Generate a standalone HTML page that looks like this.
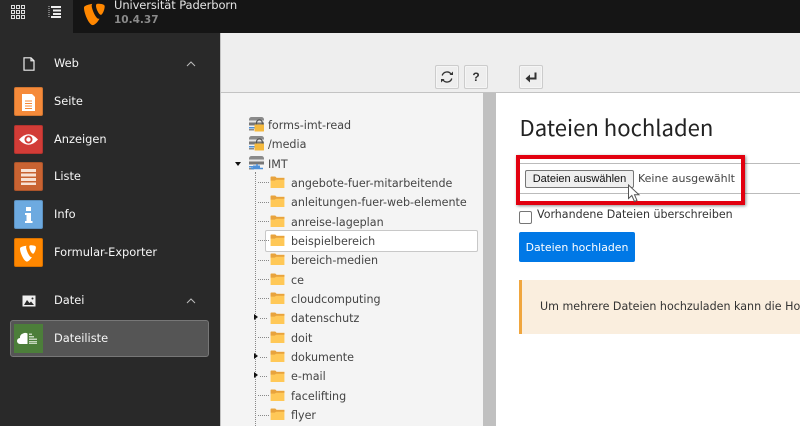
<!DOCTYPE html>
<html><head><meta charset="utf-8"><style>
html,body{margin:0;padding:0;width:800px;height:426px;overflow:hidden;background:#fff}
body{position:relative;font-family:"DejaVu Sans","Liberation Sans",sans-serif;color:#333}
.a{position:absolute;white-space:nowrap}
.m{position:absolute;left:54px;font-size:11.4px;color:#f6f6f6;line-height:14px;white-space:nowrap;font-weight:400}
.ic{position:absolute;left:14px;width:29px;height:29px;border-radius:2px;box-shadow:inset 0 0 0 1px rgba(0,0,0,.15)}
.ic svg{position:absolute;left:0;top:0}
.t{position:absolute;left:291px;font-size:11.13px;color:#444;line-height:14px;white-space:nowrap}
.f{position:absolute;left:270px;width:15px;height:12px}
.h{position:absolute;left:258px;width:11px;border-top:1px dotted #888;height:0}
.ar{position:absolute;left:254px;width:0;height:0;border-left:4px solid #111;border-top:3.5px solid transparent;border-bottom:3.5px solid transparent}
.btn{position:absolute;top:65px;width:22px;height:22px;border:1px solid #ccc;border-radius:2px;background:#eee;box-shadow:inset 0 0 0 1px #f5f5f5}
</style></head><body>
<svg width="0" height="0" style="position:absolute"><defs>
<g id="fo"><path d="M0 1.5Q0 .5 1 .5H5L6.5 2H15V13H0Z" fill="#ffc857"/><path d="M0 1.5Q0 .5 1 .5H5L6.5 2H15V4H6L4.5 5H0Z" fill="#e8a33d"/></g>
<g id="dr"><rect x="1" y="1" width="15" height="8" rx="2.5" fill="#8a8a8a"/><rect x="1" y="4.500" width="15" height="2" fill="#e8e8e8"/><rect x="1" y="6.500" width="15" height="3" fill="#777"/><rect x="1" y="11" width="6" height="1.500" fill="#4d90d8"/><rect x="1" y="13" width="5" height="1.500" fill="#888"/></g>
<g id="lk"><path d="M8.500 9V6.800a2.900 2.900 0 0 1 5.800 0V9" fill="none" stroke="#555" stroke-width="1.200"/><rect x="6.500" y="8.500" width="9.500" height="7" rx=".5" fill="#f4b93e"/></g>
</defs></svg>

<div class="a" style="left:0;top:0;width:220px;height:426px;background:#292929"></div>
<div class="a" style="left:73px;top:0;width:727px;height:33px;background:#151515"></div>

<svg class="a" style="left:11px;top:5px" width="14" height="14" viewBox="0 0 14 14" fill="none" stroke="#ddd" stroke-width="1"><rect x=".5" y=".5" width="3" height="3"/><rect x="5.500" y=".5" width="3" height="3"/><rect x="10.500" y=".5" width="3" height="3"/><rect x=".5" y="5.500" width="3" height="3"/><rect x="5.500" y="5.500" width="3" height="3"/><rect x="10.500" y="5.500" width="3" height="3"/><rect x=".5" y="10.500" width="3" height="3"/><rect x="5.500" y="10.500" width="3" height="3"/><rect x="10.500" y="10.500" width="3" height="3"/></svg>
<svg class="a" style="left:48px;top:5px" width="13" height="14" viewBox="0 0 13 14"><path d="M1 1V13" stroke="#ccc" stroke-dasharray="1 1"/><path d="M3 1H13V3H3ZM5 4.500H13V6.500H5ZM5 8H13V10H5ZM3 11H13V13H3Z" fill="#eee"/></svg>
<svg class="a" style="left:84px;top:3px" width="21" height="23" viewBox="0 0 21 23"><path d="M15.500 15.700c-.3.100-.6.100-.9.100-2.800 0-6.900-9.800-6.900-13 0-1.200.3-1.600.7-1.900C5 1.300 1 2.500 .3 3.800 0 4.100 0 4.500 0 5.100c0 5 5 17 8.800 17 1.800 0 4.800-2.900 6.700-6.400Z" fill="#ff8700"/><path d="M13.700.8c3.500 0 7 .6 7 2.500 0 3.900-2.500 8.600-3.700 8.600C14.800 11.900 12 5.800 12 2.800 12 1.400 12.500.8 13.700.8Z" fill="#ff8700"/></svg>
<div class="a" style="left:114px;top:-2px;font-size:11.5px;line-height:14px;color:#e4e4e4;letter-spacing:-.1px">Universität Paderborn</div>
<div class="a" style="left:114px;top:13px;font-size:10.5px;font-weight:700;line-height:14px;color:#8a8a8a">10.4.37</div>

<svg class="a" style="left:23px;top:57px" width="12" height="14" viewBox="0 0 12 14"><path d="M1 .8H8L11 3.800V13.200H1ZM8 .8V3.800H11" fill="none" stroke="#eee" stroke-width="1.200"/></svg>
<div class="m" style="top:56px">Web</div>
<svg class="a" style="left:186px;top:61px" width="10" height="6" viewBox="0 0 10 6"><path d="M1 5L5 1L9 5" fill="none" stroke="#bbb" stroke-width="1"/></svg>

<div class="ic" style="top:87px;background:#f58a3a"><svg width="29" height="29"><path d="M8 7H18L21 10V24H8Z" fill="#fff"/><path d="M11 14H18M11 16.500H18M11 19H18M11 21.500H18" stroke="#f58a3a"/></svg></div>
<div class="m" style="top:94px">Seite</div>
<div class="ic" style="top:125px;background:#d23c37"><svg width="29" height="29"><path d="M5 14.500Q14.500 4 24 14.500Q14.500 25 5 14.500Z" fill="#fff"/><circle cx="14.500" cy="14.500" r="4" fill="#d23c37"/><circle cx="14.500" cy="14.500" r="2.200" fill="#fff"/></svg></div>
<div class="m" style="top:132px">Anzeigen</div>
<div class="ic" style="top:162px;background:#c96332"><svg width="29" height="29"><path d="M7 7H22V10H7ZM7 11.500H22V14.500H7ZM7 16H22V19H7ZM7 20.500H22V23H7Z" fill="#f8e2d5"/></svg></div>
<div class="m" style="top:169px">Liste</div>
<div class="ic" style="top:200px;background:#6daae0"><svg width="29" height="29"><rect x="12" y="7" width="5" height="4" fill="#fff"/><path d="M11 13H17V21H18.500V23H11V21H12.500V15H11Z" fill="#fff"/></svg></div>
<div class="m" style="top:207px">Info</div>
<div class="ic" style="top:238px;background:#ff8700"><svg width="29" height="29"><path d="M18 19c-.3.100-.5.100-.7.100-2.100 0-5.200-7.400-5.200-9.800 0-.9.200-1.200.5-1.500C10 8 7 8.900 6.300 9.800c-.2.300-.3.600-.3 1 0 3.800 4 12.800 6.900 12.800 1.400 0 3.600-2.200 5.100-4.600Z" fill="#fff"/><path d="M16.600 7.300c2.600 0 5.300.5 5.300 1.900 0 2.900-1.900 6.500-2.800 6.500-1.700 0-3.800-4.600-3.800-6.900 0-1 .4-1.500 1.300-1.500Z" fill="#fff"/></svg></div>
<div class="m" style="top:245px">Formular-Exporter</div>

<svg class="a" style="left:22px;top:295px" width="14" height="12" viewBox="0 0 14 12"><rect x=".5" y=".5" width="13" height="11" fill="#eee"/><path d="M2 10L5 5L7.500 8L9 6.500L12 10Z" fill="#292929"/><circle cx="10.500" cy="3.500" r="1" fill="#292929"/></svg>
<div class="m" style="top:293px">Datei</div>
<svg class="a" style="left:186px;top:298px" width="10" height="6" viewBox="0 0 10 6"><path d="M1 5L5 1L9 5" fill="none" stroke="#bbb" stroke-width="1"/></svg>

<div class="a" style="left:10px;top:320px;width:197px;height:35px;background:#555;border:1px solid #777;border-radius:3px"></div>
<div class="ic" style="top:324px;background:#4c7e3a;box-shadow:none;border-radius:0"><svg width="29" height="29"><path d="M6 19.500a3 3 0 0 1 0-6a4 4 0 0 1 3-4.500a4.500 4.500 0 0 1 4.500 0V19.500Z" fill="#fff" transform="translate(0,.5)"/><path d="M15 9.500H18V11H15ZM15 12H20V13.500H15ZM15 14.500H23V16H15ZM15 17H23V18.500H15ZM15 19H23V20H15Z" fill="#c5d6bd"/></svg></div>
<div class="m" style="top:331px">Dateiliste</div>

<div class="a" style="left:220px;top:33px;width:580px;height:59px;background:#eee;border-bottom:1px solid #c3c3c3"></div>
<div class="a" style="left:220px;top:93px;width:263px;height:333px;background:#f4f4f4"></div>
<div class="a" style="left:220px;top:33px;width:1px;height:393px;background:#c3c3c3"></div>
<div class="a" style="left:483px;top:93px;width:13px;height:333px;background:#c0c0c0"></div>

<div class="btn" style="left:435px"><svg width="22" height="22" viewBox="0 0 22 22"><path d="M6.200 9.500A5 5 0 0 1 15.200 8.300M15.800 12.500A5 5 0 0 1 6.800 13.700" fill="none" stroke="#333" stroke-width="1.300"/><path d="M13.500 9H17V5.500ZM8.500 13H5V16.500Z" fill="#333"/></svg></div>
<div class="btn" style="left:464px"><div class="a" style="left:0;top:4px;width:22px;text-align:center;font-size:12px;font-weight:700;line-height:14px;font-family:'Liberation Sans',sans-serif">?</div></div>
<div class="btn" style="left:519px"><svg width="22" height="22" viewBox="0 0 22 22"><path d="M15.500 6.500V12.500H8" fill="none" stroke="#333" stroke-width="2"/><path d="M5.500 12.500L10 8.500V16.500Z" fill="#333"/></svg></div>

<svg class="a" style="left:248px;top:116px" width="18" height="16"><use href="#dr"/><use href="#lk"/></svg>
<div class="t" style="left:268px;top:119px">forms-imt-read</div>
<svg class="a" style="left:248px;top:135px" width="18" height="16"><use href="#dr"/><use href="#lk"/></svg>
<div class="t" style="left:268px;top:138px">/media</div>
<div class="a" style="left:235px;top:162px;width:0;height:0;border-top:4px solid #111;border-left:3.500px solid transparent;border-right:3.500px solid transparent"></div>
<svg class="a" style="left:248px;top:155px" width="18" height="16"><use href="#dr"/><path d="M3 13.500H15M9 9V12" stroke="#4d90d8" stroke-width="1.500"/><rect x="5" y="10.500" width="7" height="3.500" fill="#4d90d8"/></svg>
<div class="t" style="left:268px;top:158px">IMT</div>

<div class="a" style="left:255px;top:172px;height:254px;border-left:1px dotted #888"></div>
<div class="a" style="left:265px;top:230px;width:211px;height:20px;background:#fff;border:1px solid #c8c8c8;border-radius:2px"></div>

<div class="h" style="top:182px"></div><svg class="f" style="top:176px" viewBox="0 0 15 13"><use href="#fo"/></svg><div class="t" style="top:177px">angebote-fuer-mitarbeitende</div>
<div class="h" style="top:202px"></div><svg class="f" style="top:195px" viewBox="0 0 15 13"><use href="#fo"/></svg><div class="t" style="top:196px">anleitungen-fuer-web-elemente</div>
<div class="h" style="top:221px"></div><svg class="f" style="top:215px" viewBox="0 0 15 13"><use href="#fo"/></svg><div class="t" style="top:216px">anreise-lageplan</div>
<div class="h" style="top:240px"></div><svg class="f" style="top:234px" viewBox="0 0 15 13"><use href="#fo"/></svg><div class="t" style="top:235px">beispielbereich</div>
<div class="h" style="top:260px"></div><svg class="f" style="top:253px" viewBox="0 0 15 13"><use href="#fo"/></svg><div class="t" style="top:254px">bereich-medien</div>
<div class="h" style="top:279px"></div><svg class="f" style="top:273px" viewBox="0 0 15 13"><use href="#fo"/></svg><div class="t" style="top:274px">ce</div>
<div class="h" style="top:298px"></div><svg class="f" style="top:292px" viewBox="0 0 15 13"><use href="#fo"/></svg><div class="t" style="top:293px">cloudcomputing</div>
<div class="ar" style="top:314px"></div><div class="h" style="top:318px;left:260px;width:7px"></div><svg class="f" style="top:312px" viewBox="0 0 15 13"><use href="#fo"/></svg><div class="t" style="top:312px">datenschutz</div>
<div class="h" style="top:337px"></div><svg class="f" style="top:331px" viewBox="0 0 15 13"><use href="#fo"/></svg><div class="t" style="top:332px">doit</div>
<div class="ar" style="top:353px"></div><div class="h" style="top:357px;left:260px;width:7px"></div><svg class="f" style="top:350px" viewBox="0 0 15 13"><use href="#fo"/></svg><div class="t" style="top:351px">dokumente</div>
<div class="ar" style="top:372px"></div><div class="h" style="top:376px;left:260px;width:7px"></div><svg class="f" style="top:370px" viewBox="0 0 15 13"><use href="#fo"/></svg><div class="t" style="top:370px">e-mail</div>
<div class="h" style="top:395px"></div><svg class="f" style="top:389px" viewBox="0 0 15 13"><use href="#fo"/></svg><div class="t" style="top:390px">facelifting</div>
<div class="h" style="top:415px"></div><svg class="f" style="top:408px" viewBox="0 0 15 13"><use href="#fo"/></svg><div class="t" style="top:409px">flyer</div>

<div class="a" style="left:519.500px;top:112px;font-size:22.100px;line-height:30px;color:#222;font-family:'Noto Sans CJK JP','DejaVu Sans',sans-serif">Dateien hochladen</div>

<div class="a" style="left:519px;top:163px;width:281px;height:29px;border-top:1px solid #bbb;border-bottom:1px solid #bbb"></div>
<div class="a" style="left:516px;top:155px;width:221px;height:42px;border:4px solid #e2000f;box-shadow:1px 1px 3px rgba(0,0,0,.45)"></div>
<div class="a" style="left:525px;top:170px;width:107px;height:16px;background:#efefef;border:1px solid #767676;border-radius:2px;text-align:center;font:11px/16px 'Liberation Sans',sans-serif;color:#111">Dateien auswählen</div>
<div class="a" style="left:638px;top:171px;font-size:11px;line-height:15px;color:#444">Keine ausgewählt</div>
<svg class="a" style="left:627px;top:184px" width="14" height="19" viewBox="0 0 14 19"><path d="M1.500 1V14.500L4.800 11.500L7.500 17.500L10 16.400L7.500 10.800H12Z" fill="#fff" stroke="#555" stroke-width="1"/></svg>

<div class="a" style="left:519px;top:211px;width:11px;height:11px;border:1px solid #767676;border-radius:2px;background:#fff"></div>
<div class="a" style="left:537px;top:208px;font-size:11.050px;line-height:14px;color:#333">Vorhandene Dateien überschreiben</div>

<div class="a" style="left:519px;top:232px;width:116px;height:30px;background:#0078e6;border-radius:2px;color:#fff;text-align:center;font-size:10.900px;line-height:31px">Dateien hochladen</div>

<div class="a" style="left:519px;top:280px;width:281px;height:54px;background:#faeede"></div>
<div class="a" style="left:519px;top:280px;width:3px;height:54px;background:#f0a63e"></div>
<div class="a" style="left:540px;top:300px;width:260px;overflow:hidden;font-size:11.100px;line-height:14px;color:#333">Um mehrere Dateien hochzuladen kann die Hochladen</div>
</body></html>
